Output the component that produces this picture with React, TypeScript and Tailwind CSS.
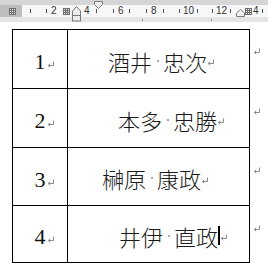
import type { ReactNode } from "react";

const rows = [
  { no: "1", first: "酒井", last: "忠次", pad: "pl-[40px]", box: "h-[60px] border-t", cursor: false },
  { no: "2", first: "本多", last: "忠勝", pad: "pl-[50px]", box: "h-[59px]", cursor: false },
  { no: "3", first: "榊原", last: "康政", pad: "pl-[34px]", box: "h-[58px]", cursor: false },
  { no: "4", first: "井伊", last: "直政", pad: "pl-[51px]", box: "h-[57px]", cursor: true },
];

// ruler labels / ticks (x positions on the ruler)
const labels = [
  { t: "2", cls: "left-[51px]" },
  { t: "4", cls: "left-[84px]" },
  { t: "6", cls: "left-[118px]" },
  { t: "8", cls: "left-[151px]" },
  { t: "10", cls: "left-[183px]" },
  { t: "12", cls: "left-[216px]" },
  { t: "4", cls: "left-[253px]" },
];

const ticks = [
  "left-[30px]",
  "left-[46px]",
  "left-[96px]",
  "left-[113px]",
  "left-[129px]",
  "left-[146px]",
  "left-[163px]",
  "left-[179px]",
  "left-[197px]",
  "left-[212px]",
  "left-[230px]",
  "left-[262px]",
];

function ReturnMark({ className = "" }: { className?: string }) {
  return (
    <svg width="8" height="7" viewBox="0 0 8 7" className={className}>
      <path d="M6.5 0.5V4.5H1.5" fill="none" stroke="#8c8c8c" strokeWidth="1" />
      <path d="M3.2 2.8L1.2 4.5L3.2 6.2" fill="none" stroke="#8c8c8c" strokeWidth="1" />
    </svg>
  );
}

function GridMark({ className = "" }: { className?: string }) {
  return (
    <svg width="7" height="7" viewBox="0 0 7 7" className={className}>
      <rect x="0.5" y="0.5" width="6" height="6" fill="#e8e8e8" stroke="#6f6f6f" />
      <path d="M2.5 0.5V6.5M4.5 0.5V6.5M0.5 2.5H6.5M0.5 4.5H6.5" stroke="#6f6f6f" />
    </svg>
  );
}

function Ruler() {
  return (
    <div className="relative h-[22px] bg-[#d6d6d6]">
      {/* ruler band */}
      <div className="absolute left-0 right-0 top-[5px] flex h-[12px]">
        <div className="w-[22px] bg-[#bdbdbd]" />
        <div className="flex-1 bg-[#f7f7f7]" />
      </div>
      <div className="absolute left-0 right-0 top-[17px] h-[5px] bg-[#e4e4e4]" />

      {ticks.map((cls) => (
        <div key={cls} className={`absolute top-[9px] h-[4px] w-px bg-[#555] ${cls}`} />
      ))}
      <div className="absolute left-[142px] top-[19px] h-[2px] w-px bg-[#888]" />
      <div className="absolute left-[211px] top-[19px] h-[2px] w-px bg-[#888]" />

      {labels.map((l) => (
        <span
          key={l.cls}
          className={`absolute top-[5px] font-['Liberation_Sans',sans-serif] text-[10px] leading-[12px] text-[#333] ${l.cls}`}
        >
          {l.t}
        </span>
      ))}

      <GridMark className="absolute left-[9px] top-[8px]" />
      <GridMark className="absolute left-[63px] top-[8px]" />
      <GridMark className="absolute left-[245px] top-[8px]" />

      {/* hanging / left indent */}
      <svg width="9" height="17" viewBox="0 0 9 17" className="absolute left-[72px] top-[5px]">
        <path d="M0.5 10.5V6L4.5 1.5L8.5 6V10.5Z" fill="#ececec" stroke="#7a7a7a" />
        <rect x="0.5" y="10.5" width="8" height="5.5" fill="#ececec" stroke="#7a7a7a" />
      </svg>
      {/* first line indent */}
      <svg width="9" height="8" viewBox="0 0 9 8" className="absolute left-[94px] top-[1px]">
        <path d="M0.5 0.5H8.5V3.5L4.5 7.5L0.5 3.5Z" fill="#ececec" stroke="#7a7a7a" />
      </svg>
      {/* right indent */}
      <svg width="9" height="8" viewBox="0 0 9 8" className="absolute left-[236px] top-[9px]">
        <path d="M0.5 7.5V4L4.5 0.5L8.5 4V7.5Z" fill="#f2f2f2" stroke="#7a7a7a" />
      </svg>
    </div>
  );
}

function NameCell({ first, last, cursor }: { first: string; last: string; cursor: boolean }): ReactNode {
  return (
    <div className="flex h-[22px] items-center font-['Noto_Sans_CJK_JP',sans-serif] text-[22px] font-light leading-none text-[#1a1a1a]">
      <span>{first}</span>
      <span className="flex w-[11px] justify-center">
        <span className="h-[2px] w-[2px] bg-[#a8a8a8]" />
      </span>
      <span>{last}</span>
      {cursor && <span className="h-[19px] w-[2px] bg-black" />}
      <ReturnMark className="translate-y-[2px]" />
    </div>
  );
}

export default function App() {
  return (
    <div className="h-[271px] w-[268px] overflow-hidden bg-white">
      <Ruler />
      <div className="ml-[12px] mt-[7px]">
        {rows.map((r) => (
          <div key={r.no} className="flex">
            <div className={`flex w-[238px] border-x border-b border-black ${r.box}`}>
              <div className="flex w-[55px] shrink-0 items-center justify-center border-r border-black pt-[6px] font-['Liberation_Serif',serif] text-[22px] leading-none text-[#111]">
                <span className="relative">
                  {r.no}
                  <ReturnMark className="absolute left-full top-[10px] ml-px" />
                </span>
              </div>
              <div className={`flex flex-1 items-center pt-[3px] ${r.pad}`}>
                <NameCell first={r.first} last={r.last} cursor={r.cursor} />
              </div>
            </div>
            <ReturnMark className="ml-[3px] mt-[19px]" />
          </div>
        ))}
      </div>
    </div>
  );
}
